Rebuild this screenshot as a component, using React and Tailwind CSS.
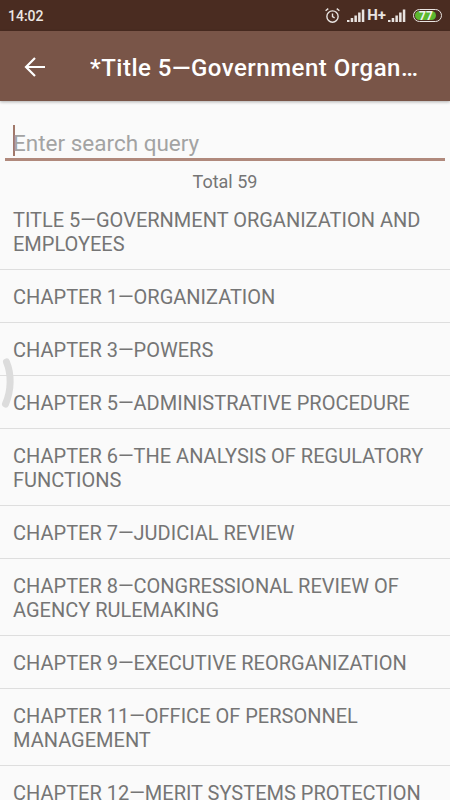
const items = [
  "TITLE 5—GOVERNMENT ORGANIZATION AND EMPLOYEES",
  "CHAPTER 1—ORGANIZATION",
  "CHAPTER 3—POWERS",
  "CHAPTER 5—ADMINISTRATIVE PROCEDURE",
  "CHAPTER 6—THE ANALYSIS OF REGULATORY FUNCTIONS",
  "CHAPTER 7—JUDICIAL REVIEW",
  "CHAPTER 8—CONGRESSIONAL REVIEW OF AGENCY RULEMAKING",
  "CHAPTER 9—EXECUTIVE REORGANIZATION",
  "CHAPTER 11—OFFICE OF PERSONNEL MANAGEMENT",
  "CHAPTER 12—MERIT SYSTEMS PROTECTION BOARD",
];

function Signal() {
  return (
    <svg width="18" height="13" viewBox="0 0 18 13" fill="#e9e4e1">
      <rect x="0" y="11" width="2.500" height="2" />
      <rect x="3.700" y="9" width="2.500" height="4" />
      <rect x="7.400" y="6.500" width="2.500" height="6.500" />
      <rect x="11.100" y="3.500" width="2.500" height="9.500" />
      <rect x="14.800" y="0.500" width="2.500" height="12.500" />
    </svg>
  );
}

export default function App() {
  return (
    <div className="relative w-[450px] h-[800px] overflow-hidden bg-[#fafafa] font-['Roboto',sans-serif]">
      <div className="h-[31px] bg-[#4a2c21] flex items-center justify-between pl-[8px] pr-[8px]">
        <span className="text-[14px] font-medium text-[#ece7e4] pt-[1px]">14:02</span>
        <div className="flex items-center">
          <svg width="17" height="17" viewBox="0 0 16 16" fill="none" stroke="#e9e4e1" strokeWidth="1.3" className="mr-[6px]">
            <circle cx="8" cy="9" r="5.300" />
            <path d="M8 6v3l2 1.200M1.500 3.500 4 1.500M14.500 3.500 12 1.500" />
          </svg>
          <Signal />
          <span className="text-[15px] font-bold text-[#e9e4e1] ml-[2px] mr-[2px] leading-none">H+</span>
          <Signal />
          <div className="ml-[7px] w-[29px] h-[13px] rounded-full border border-[#e9e4e1] p-[1px] relative">
            <div className="h-full w-[21px] rounded-full bg-[#5cb82e]" />
            <span className="absolute inset-0 flex items-center justify-center pr-[3px] text-[12px] font-bold text-[#f2f2f2] leading-none">77</span>
          </div>
        </div>
      </div>

      <header className="h-[70px] bg-[#795548] flex items-center shadow-[0_1px_3px_rgba(0,0,0,0.3)] relative">
        <div className="w-[72px] pl-[24px] pt-[2px] shrink-0">
          <svg width="24" height="24" viewBox="0 0 24 24" fill="none" stroke="#ffffff" strokeWidth="2.2" className="block">
            <path d="M21 12H2.500M11 3 2 12l9 9" />
          </svg>
        </div>
        <h1 className="ml-[18px] w-[328px] pt-[3px] truncate text-[24px] leading-[32px] font-medium text-white tracking-[0.5px]">
          *Title 5—Government Organization and Employees
        </h1>
      </header>

      <div className="pt-[22px] px-[5px]">
        <div className="h-[38px] border-b-[3px] border-[#b0897c] pl-[8px] flex items-center">
          <div className="w-[1.500px] h-[31px] bg-[#a1786a]" />
          <span className="text-[22.500px] leading-[30px] text-[#a3a3a3] -ml-[1.500px] pt-[4px]">Enter search query</span>
        </div>
      </div>

      <div className="mt-[10px] text-center text-[18px] leading-[22px] text-[#757575]">Total 59</div>

      <ul>
        {items.map((t) => (
          <li key={t} className="px-[13px] pt-[15px] pb-[13px] border-b border-[#dedede] text-[20px] leading-[24px] text-[#757575]">
            {t}
          </li>
        ))}
      </ul>

      <svg width="16" height="54" viewBox="0 0 16 54" fill="none" className="absolute left-0 top-[356px]">
        <path d="M6.500 6C11.500 18 11.500 34 5.500 48" stroke="#dcdcdc" strokeWidth="7" strokeLinecap="round" />
      </svg>
    </div>
  );
}
